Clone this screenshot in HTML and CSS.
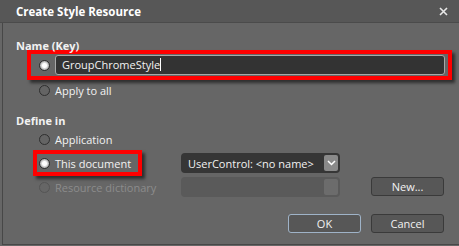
FILE: index.html
```html
<!DOCTYPE html>
<html lang="en">
<head>
  <meta charset="UTF-8">
  <title>Create Style Resource</title>
  <link rel="stylesheet" href="styles.css">
</head>
<body>

  <div class="dialog">
    <div class="titlebar">
      <span class="title">Create Style Resource</span>
      <svg class="close" width="9" height="9" viewBox="0 0 9 9">
        <path d="M1 1 L8 8 M8 1 L1 8" stroke="#e8e8e8" stroke-width="1.6"/>
      </svg>
    </div>

    <div class="content">
      <div class="label">Name (Key)</div>
      <div class="name-row marked">
        <span class="radio checked"></span>
        <div class="textbox">GroupChromeStyle<span class="caret"></span></div>
      </div>
      <div class="option apply">
        <span class="radio"></span>
        <span>Apply to all</span>
      </div>

      <div class="label define">Define in</div>
      <div class="define-grid">
        <div class="option">
          <span class="radio"></span>
          <span>Application</span>
        </div>
        <div></div>
        <div></div>

        <div class="option doc marked">
          <span class="radio checked"></span>
          <span>This document</span>
        </div>
        <div class="combo">
          <span>UserControl: &lt;no name&gt;</span>
          <span class="combo-btn">
            <svg width="9" height="6" viewBox="0 0 9 6">
              <path d="M1 1 L4.5 4.5 L8 1" stroke="#fff" stroke-width="1.5" fill="none"/>
            </svg>
          </span>
        </div>
        <div></div>

        <div class="option disabled">
          <span class="radio"></span>
          <span>Resource dictionary</span>
        </div>
        <div class="combo off">
          <span></span>
          <span class="combo-btn"></span>
        </div>
        <button class="btn">New...</button>
      </div>

      <div class="actions">
        <button class="btn default">OK</button>
        <button class="btn">Cancel</button>
      </div>
    </div>
  </div>

</body>
</html>
```

FILE: styles.css
```css
* { margin: 0; padding: 0; box-sizing: border-box; }
html, body {
  width: 100%;
  height: 100%;
  overflow: hidden;
  background: #6a6a6a;
}
body {
  font-family: 'Open Sans', 'Noto Sans', sans-serif;
  font-size: 11px;
  color: #f2f2f2;
}
.dialog {
  width: 459px;
  height: 246px;
  display: flex;
  flex-direction: column;
  background: #666666;
}
.titlebar {
  height: 23px;
  flex: none;
  display: flex;
  align-items: center;
  justify-content: space-between;
  padding: 0 11px 0 16px;
  background: #575757;
  border-bottom: 1px solid #4b4b4b;
}
.title {
  font-weight: bold;
  font-size: 11.5px;
  color: #fff;
}
.content {
  flex: 1;
  margin-left: 2px;
  margin-bottom: 1px;
  border-left: 1px solid #474747;
  border-bottom: 1px solid #474747;
  padding: 15px 15px 0 13px;
}
.label {
  font-weight: bold;
  height: 16px;
  line-height: 16px;
}
.label.define { margin-top: 14px; }

.marked {
  box-shadow: 0 0 0 4px #ff0000, 3px 3px 3px 4px rgba(0, 0, 0, 0.55);
}
.name-row {
  display: flex;
  align-items: center;
  gap: 5px;
  height: 22px;
  width: 417px;
  margin-left: 15px;
  padding-left: 8px;
}
.radio {
  width: 11px;
  height: 11px;
  flex: none;
  border-radius: 50%;
  border: 1px solid #2f2f2f;
  background: #646464;
}
.radio.checked {
  background: radial-gradient(circle, #ffffff 0 2px, #d9d9d9 3px, #9a9a9a 5px);
}
.textbox {
  width: 390px;
  height: 20px;
  line-height: 18px;
  padding-left: 6px;
  background: #333333;
  border: 1px solid #a8a8a8;
  border-radius: 3px;
}
.caret {
  display: inline-block;
  width: 1px;
  height: 13px;
  vertical-align: -2px;
  background: #fff;
}
.option {
  display: flex;
  align-items: center;
  gap: 5px;
  white-space: nowrap;
}
.option.apply {
  height: 18px;
  margin-top: 5px;
  padding-left: 23px;
}
.define-grid {
  display: grid;
  grid-template-columns: 117px 159px 73px;
  column-gap: 31px;
  grid-auto-rows: 20px;
  row-gap: 4px;
  margin-left: 17px;
}
.define-grid .option { padding-left: 6px; }
.option.doc {
  align-self: center;
  height: 18px;
  width: 101px;
  margin-left: 4px;
  padding-left: 2px;
}
.option.disabled { color: #8c8c8c; }
.option.disabled .radio { border-color: #555; background: #666; }

.combo {
  display: flex;
  align-items: center;
  justify-content: space-between;
  padding: 0 2px 0 7px;
  background: #363636;
  border-radius: 4px;
  white-space: nowrap;
}
.combo-btn {
  width: 14px;
  height: 16px;
  display: flex;
  align-items: center;
  justify-content: center;
  background: #8a8a8a;
  border-radius: 2px;
}
.combo.off { background: #5a5a5a; }
.combo.off .combo-btn { background: #6c6c6c; }

.btn {
  font: inherit;
  color: #f2f2f2;
  height: 19px;
  background: #575757;
  border: 1px solid #3a3a3a;
  border-radius: 3px;
}
.actions {
  display: flex;
  justify-content: flex-end;
  gap: 10px;
  margin-top: 17px;
}
.actions .btn { width: 73px; height: 19px; }
.btn.default { border-color: #9fb3c8; }
```
